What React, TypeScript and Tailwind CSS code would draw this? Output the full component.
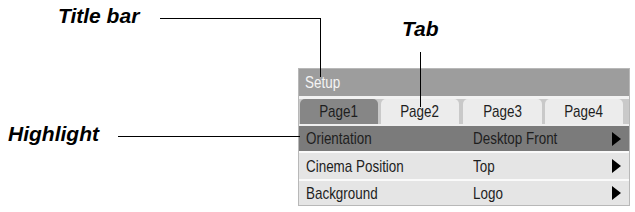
const font = { fontFamily: '"Liberation Sans", Arial, sans-serif' };

const tabs = [
  { label: 'Page1', width: 'w-[78px]', active: true },
  { label: 'Page2', width: 'w-[78px]', active: false },
  { label: 'Page3', width: 'w-[79px]', active: false },
  { label: 'Page4', width: 'w-[78px]', active: false },
];

const rows = [
  { label: 'Orientation', value: 'Desktop Front', highlight: true, h: 'h-[25px]' },
  { label: 'Cinema Position', value: 'Top', highlight: false, h: 'h-[26px]' },
  { label: 'Background', value: 'Logo', highlight: false, h: 'h-[24px]' },
];

// narrow look of the OSD font: squeeze Liberation Sans horizontally
function Narrow({ children, center }: { children: string; center?: boolean }) {
  return (
    <span className={`inline-block whitespace-nowrap scale-x-[0.79] ${center ? 'origin-center' : 'origin-left'}`}>
      {children}
    </span>
  );
}

function Arrow() {
  return (
    <svg width="9" height="14" viewBox="0 0 9 14" className="mr-[8px]">
      <polygon points="0,0 9,7 0,14" fill="#000" />
    </svg>
  );
}

function Callout({ className, children }: { className: string; children: string }) {
  return (
    <div className={`absolute text-[21px] font-bold italic leading-none text-black ${className}`} style={font}>
      {children}
    </div>
  );
}

export default function App() {
  return (
    <div className="relative w-[635px] h-[212px] overflow-hidden bg-white">
      {/* Setup menu */}
      <div className="pl-[298px] pt-[68px]">
        <div className="w-[332px] border border-[#b8b8b8] bg-[#c9c9c9] text-[17px] leading-none text-[#1e1e1e]" style={font}>
          <div className="flex h-[27px] items-center bg-[#9d9d9d] pl-[6px] text-[#f4f4f4]">
            <Narrow>Setup</Narrow>
          </div>
          <div className="h-[3px] bg-[#f2f2f2]" />
          <div className="flex h-[25px] gap-[3px] px-[1px]">
            {tabs.map((t, i) => (
              <div
                key={t.label}
                className={`flex ${t.width} ${i === 2 ? 'ml-[1px]' : ''} items-center justify-center rounded-t-[5px] ${
                  t.active ? 'bg-[#868686]' : 'bg-[#ececec]'
                }`}
              >
                <Narrow center>{t.label}</Narrow>
              </div>
            ))}
          </div>
          <div className="h-[2px] bg-[#efefef]" />
          {rows.map((r, i) => (
            <div key={r.label}>
              {i > 0 && <div className="h-[2px] bg-[#fafafa]" />}
              <div className={`flex ${r.h} items-center ${r.highlight ? 'bg-[#7b7b7b]' : 'bg-[#e5e5e5]'}`}>
                <div className="w-[174px] pl-[7px]">
                  <Narrow>{r.label}</Narrow>
                </div>
                <div className="flex-1">
                  <Narrow>{r.value}</Narrow>
                </div>
                <Arrow />
              </div>
            </div>
          ))}
        </div>
      </div>

      {/* Callouts */}
      <Callout className="left-[58px] top-[5px]">Title bar</Callout>
      <div className="absolute left-[160px] top-[18px] h-[1px] w-[161px] bg-black" />
      <div className="absolute left-[320px] top-[18px] h-[59px] w-[1px] bg-black" />

      <Callout className="left-[402px] top-[18px]">Tab</Callout>
      <div className="absolute left-[420px] top-[52px] h-[55px] w-[1px] bg-black" />

      <Callout className="left-[8px] top-[123px]">Highlight</Callout>
      <div className="absolute left-[118px] top-[136px] h-[1px] w-[182px] bg-black" />
    </div>
  );
}
